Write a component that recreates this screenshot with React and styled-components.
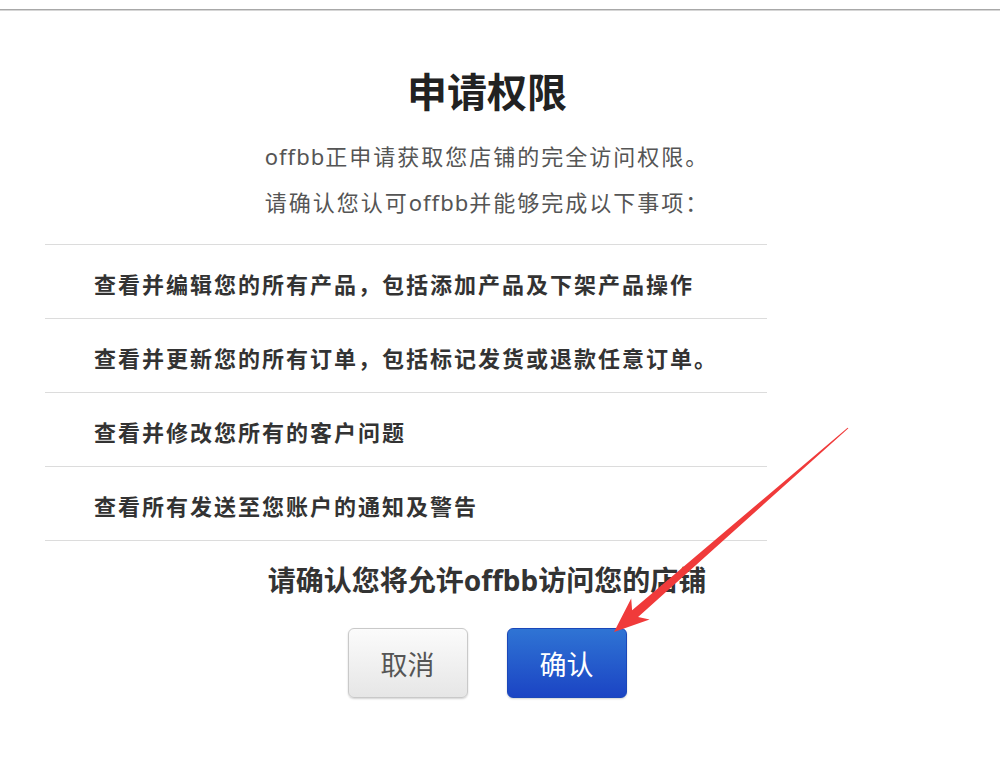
import React from 'react'
import styled, { createGlobalStyle } from "styled-components";

const GlobalStyle = createGlobalStyle`
  body {
    margin: 0;
    background: #ffffff;
    font-family: "Noto Sans", "Noto Sans CJK SC", sans-serif;
  }
`;

const items = [
  "查看并编辑您的所有产品，包括添加产品及下架产品操作",
  "查看并更新您的所有订单，包括标记发货或退款任意订单。",
  "查看并修改您所有的客户问题",
  "查看所有发送至您账户的通知及警告",
];

function App() {
  return (
    <>
      <GlobalStyle />
      <Page>
        <TopRule />
        <Main>
          <Title>申请权限</Title>
          <Intro>
            <p><Latin>offbb</Latin>正申请获取您店铺的完全访问权限。</p>
            <p>请确认您认可<Latin>offbb</Latin>并能够完成以下事项：</p>
          </Intro>
          <PermissionList>
            {items.map((text) => (
              <PermissionRow key={text}>{text}</PermissionRow>
            ))}
          </PermissionList>
          <ConfirmText>请确认您将允许offbb访问您的店铺</ConfirmText>
          <Actions>
            <Button>取消</Button>
            <Button primary>确认</Button>
          </Actions>
        </Main>
        <Arrow viewBox="590 410 280 240" width="280" height="240">
          <polygon
            points="848.4,428.3 638.1,617.0 649.6,619.6 614,632 631.2,598.4 632.1,610.2 847.6,427.7"
            fill="#f03a3a"
          />
        </Arrow>
      </Page>
    </>
  );
}

export default App;

const Page = styled.div`
  position: relative;
  width: 1000px;
  height: 761px;
  padding-top: 9px;
  box-sizing: border-box;
  overflow: hidden;
`;

const TopRule = styled.div`
  height: 1px;
  background: #a8a8a8;
  border-bottom: 1px solid #d6d6d6;
`;

const Main = styled.div`
  display: flex;
  flex-direction: column;
  width: 974px;
`;

const Title = styled.h1`
  margin: 54px 0 0;
  text-align: center;
  font-family: "Noto Sans CJK SC", sans-serif;
  font-size: 40px;
  font-weight: 700;
  line-height: 50px;
  color: #222;
`;

const Intro = styled.div`
  align-self: center;
  margin-top: 18px;
  p {
    margin: 0;
    font-size: 22px;
    line-height: 46px;
    letter-spacing: 2px;
    color: #555;
  }
`;

const Latin = styled.span`
  letter-spacing: 1px;
`;

const PermissionList = styled.div`
  margin: 19px 0 0 45px;
  width: 722px;
  border-bottom: 1px solid #dcdcdc;
`;

const PermissionRow = styled.div`
  display: flex;
  align-items: center;
  height: 74px;
  padding: 3px 0 0 49px;
  box-sizing: border-box;
  border-top: 1px solid #dcdcdc;
  font-size: 22px;
  font-weight: 700;
  letter-spacing: 2px;
  color: #333;
`;

const ConfirmText = styled.div`
  margin-top: 19px;
  text-align: center;
  font-size: 28px;
  font-weight: 700;
  line-height: 40px;
  color: #333;
`;

const Actions = styled.div`
  display: flex;
  justify-content: center;
  gap: 39px;
  margin-top: 28px;
`;

const Button = styled.button`
  width: 120px;
  height: 70px;
  border-radius: 6px;
  font-family: "Noto Sans CJK SC", sans-serif;
  font-size: 27px;
  cursor: pointer;
  border: 1px solid ${(p) => (p.primary ? "#1a47b9" : "#c9c9c9")};
  color: ${(p) => (p.primary ? "#ffffff" : "#555555")};
  background: ${(p) =>
    p.primary
      ? "linear-gradient(#2f74d4, #1b44c4)"
      : "linear-gradient(#fbfbfb, #e6e6e6)"};
  box-shadow: 0 1px 2px rgba(0, 0, 0, 0.18);
`;

const Arrow = styled.svg`
  position: absolute;
  left: 590px;
  top: 410px;
  pointer-events: none;
`;
